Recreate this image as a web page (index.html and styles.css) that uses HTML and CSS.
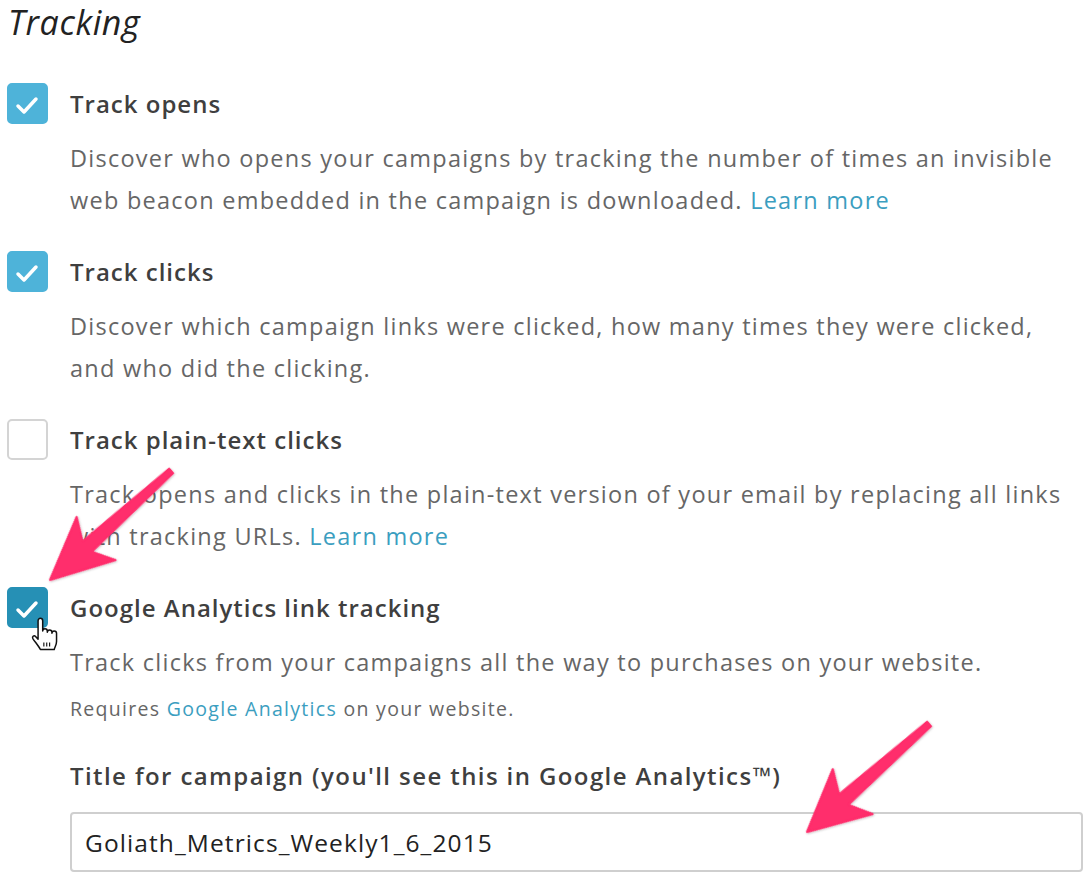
FILE: index.html
```html
<!DOCTYPE html>
<html lang="en">
<head>
    <meta charset="UTF-8">
    <title>Tracking</title>
    <link rel="stylesheet" href="styles.css">
</head>
<body>
    <div class="tracking">
        <h2 class="tracking-title">Tracking</h2>

        <div class="option">
            <span class="check checked">
                <svg viewBox="0 0 41 41" width="41" height="41"><polyline points="11,23 17,29 29,16" /></svg>
            </span>
            <div class="option-body">
                <div class="option-label">Track opens</div>
                <p class="option-desc">Discover who opens your campaigns by tracking the number of times an invisible web beacon embedded in the campaign is downloaded. <a href="#">Learn more</a></p>
            </div>
        </div>

        <div class="option">
            <span class="check checked">
                <svg viewBox="0 0 41 41" width="41" height="41"><polyline points="11,23 17,29 29,16" /></svg>
            </span>
            <div class="option-body">
                <div class="option-label">Track clicks</div>
                <p class="option-desc">Discover which campaign links were clicked, how many times they were clicked, and who did the clicking.</p>
            </div>
        </div>

        <div class="option">
            <span class="check"></span>
            <div class="option-body">
                <div class="option-label">Track plain-text clicks</div>
                <p class="option-desc">Track opens and clicks in the plain-text version of your email by replacing all links with tracking URLs. <a href="#">Learn more</a></p>
            </div>
        </div>

        <div class="option">
            <span class="check checked active">
                <svg viewBox="0 0 41 41" width="41" height="41"><polyline points="11,23 17,29 29,16" /></svg>
                <!-- pointer cursor over the box -->
                <svg class="cursor" viewBox="0 0 26 32" width="30" height="37">
                    <path d="M7 4a2 2 0 0 1 4 0V13a2 2 0 0 1 4 0v1a2 2 0 0 1 4 0v1a2 2 0 0 1 4 0v7c0 3-1.5 5-2 7H9C7.5 26 4 22 2.5 19.5c-1-1.8 1-3.2 2.5-1.6L7 20z" />
                    <path class="lines" d="M12 23v3.5M14.5 23v3.5M17 23v3.5" />
                </svg>
            </span>
            <div class="option-body">
                <div class="option-label">Google Analytics link tracking</div>
                <p class="option-desc">Track clicks from your campaigns all the way to purchases on your website.</p>
                <p class="option-note">Requires <a href="#">Google Analytics</a> on your website.</p>

                <label class="field-label" for="ga-title">Title for campaign (you'll see this in Google Analytics™)</label>
                <input id="ga-title" class="field-input" type="text" value="Goliath_Metrics_Weekly1_6_2015">
            </div>
        </div>
    </div>

    <!-- annotation arrows -->
    <svg class="arrows" width="1092" height="890" viewBox="0 0 1092 890">
        <defs>
            <filter id="arrow-shadow" x="-20%" y="-20%" width="140%" height="140%">
                <feDropShadow dx="0" dy="1" stdDeviation="1.2" flood-color="#000" flood-opacity="0.25" />
            </filter>
        </defs>
        <g class="arrow" transform="translate(50 580) rotate(-42)">
            <polygon points="0,0 62,-29 50,-7 163,-3 163,3 50,7 62,29" />
        </g>
        <g class="arrow" transform="translate(807 832) rotate(-41.5)">
            <polygon points="0,0 61,-30 49,-7 163,-3 163,3 49,7 61,30" />
        </g>
    </svg>
</body>
</html>
```

FILE: styles.css
```css
body {
    margin: 0;
    background: #fff;
    font-family: "Open Sans", "Liberation Sans", sans-serif;
    color: #333;
    letter-spacing: 1.1px;
}
.tracking {
    width: 1076px;
    padding-left: 7px;
}
.tracking-title {
    margin: 0 0 39px 1px;
    font-size: 34px;
    line-height: 44px;
    font-style: italic;
    font-weight: 400;
    letter-spacing: 0.6px;
    color: #222;
}
.option {
    display: flex;
    align-items: flex-start;
    gap: 22px;
    margin-bottom: 30px;
}
.check {
    position: relative;
    flex: none;
    box-sizing: border-box;
    width: 41px;
    height: 41px;
    border: 2px solid #d4d4d4;
    border-radius: 5px;
    background: #fff;
}
.check svg {
    display: block;
    margin: -2px;
}
.check polyline {
    fill: none;
    stroke: #fff;
    stroke-width: 3.5;
    stroke-linecap: round;
    stroke-linejoin: round;
}
.check.checked {
    border-color: #4eb3d9;
    background: #4eb3d9;
}
.check.active {
    border-color: #2690b5;
    background: #2690b5;
}
.check .cursor {
    position: absolute;
    left: 21px;
    top: 27px;
    margin: 0;
}
.cursor path {
    fill: #fff;
    stroke: #111;
    stroke-width: 1.3;
    stroke-linejoin: round;
}
.cursor .lines {
    fill: none;
    stroke-width: 1;
}
.option-body {
    flex: 1;
}
.option-label {
    font-size: 24px;
    line-height: 41px;
    font-weight: 600;
    letter-spacing: 1px;
    color: #3f3f3f;
}
.option-desc {
    margin: 13px 0 0;
    font-size: 23.5px;
    line-height: 42px;
    letter-spacing: 1.25px;
    color: #666;
}
.option-desc a,
.option-note a {
    color: #3b9ec0;
    text-decoration: none;
}
.option-note {
    margin: 3px 0 0;
    font-size: 19.5px;
    line-height: 46px;
    letter-spacing: 1.3px;
    color: #666;
}
.field-label {
    display: block;
    margin-top: 23px;
    font-size: 24px;
    line-height: 42px;
    font-weight: 600;
    letter-spacing: 1.4px;
    color: #3f3f3f;
}
.field-input {
    display: block;
    box-sizing: border-box;
    width: 100%;
    height: 60px;
    margin-top: 15px;
    padding: 0 13px;
    border: 2px solid #cfcfcf;
    border-radius: 4px;
    font-family: inherit;
    font-size: 24.5px;
    letter-spacing: 1.1px;
    color: #222;
}
.arrows {
    position: absolute;
    left: 0;
    top: 0;
    pointer-events: none;
}
.arrow polygon {
    fill: #ff2d6c;
    stroke: #ff2d6c;
    stroke-width: 2;
    stroke-linejoin: round;
    filter: url(#arrow-shadow);
}
```
